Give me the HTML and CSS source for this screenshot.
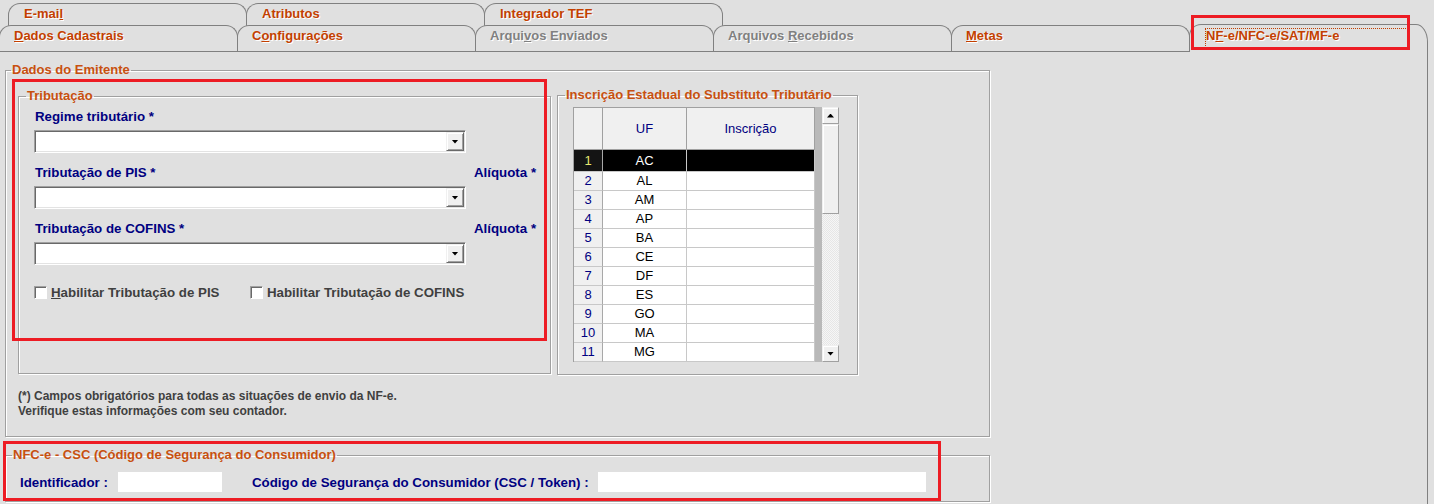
FILE: index.html
```html
<!DOCTYPE html>
<html lang="pt-BR">
<head>
    <meta charset="UTF-8">
    <title>NF-e/NFC-e/SAT/MF-e</title>
    <link rel="stylesheet" href="styles.css">
</head>
<body>

<!-- Abas -->
<div class="tabbar">
    <div class="tab-row tab-row-top">
        <div class="tab">E-mai<u>l</u></div>
        <div class="tab">Atributos</div>
        <div class="tab">Integrador TEF</div>
    </div>
    <div class="tab-row tab-row-bottom">
        <div class="tab"><u>D</u>ados Cadastrais</div>
        <div class="tab">C<u>o</u>nfigurações</div>
        <div class="tab tab-disabled">Arqui<u>v</u>os Enviados</div>
        <div class="tab tab-disabled">Arquivos <u>R</u>ecebidos</div>
        <div class="tab"><u>M</u>etas</div>
        <div class="tab tab-active"><span class="focus">N<u>F</u>-e/NFC-e/SAT/MF-e</span></div>
    </div>
</div>

<div class="panel">
    <fieldset class="group emitente">
        <legend>Dados do Emitente</legend>
        <div class="emitente-row">

            <!-- Tributação -->
            <fieldset class="group tributacao">
                <legend>Tributação</legend>
                <div class="trib-body">
                    <div class="field-head"><span>Regime tributário *</span></div>
                    <div class="combo"><span class="combo-btn"></span></div>

                    <div class="field-head"><span>Tributação de PIS *</span><span>Alíquota *</span></div>
                    <div class="combo"><span class="combo-btn"></span></div>

                    <div class="field-head"><span>Tributação de COFINS *</span><span>Alíquota *</span></div>
                    <div class="combo"><span class="combo-btn"></span></div>

                    <div class="checks">
                        <label class="check"><span class="check-box"></span><span><u>H</u>abilitar Tributação de PIS</span></label>
                        <label class="check"><span class="check-box"></span><span>Habilitar Tributação de COFINS</span></label>
                    </div>
                </div>
            </fieldset>

            <!-- Inscrição Estadual -->
            <fieldset class="group ie">
                <legend>Inscrição Estadual do Substituto Tributário</legend>
                <div class="ie-body">
                    <div class="grid">
                        <div class="grid-row grid-head">
                            <div class="cell cell-head"></div>
                            <div class="cell cell-head">UF</div>
                            <div class="cell cell-head">Inscrição</div>
                        </div>
                        <div class="grid-row selected"><div class="cell cell-num">1</div><div class="cell">AC</div><div class="cell"></div></div>
                        <div class="grid-row"><div class="cell cell-num">2</div><div class="cell">AL</div><div class="cell"></div></div>
                        <div class="grid-row"><div class="cell cell-num">3</div><div class="cell">AM</div><div class="cell"></div></div>
                        <div class="grid-row"><div class="cell cell-num">4</div><div class="cell">AP</div><div class="cell"></div></div>
                        <div class="grid-row"><div class="cell cell-num">5</div><div class="cell">BA</div><div class="cell"></div></div>
                        <div class="grid-row"><div class="cell cell-num">6</div><div class="cell">CE</div><div class="cell"></div></div>
                        <div class="grid-row"><div class="cell cell-num">7</div><div class="cell">DF</div><div class="cell"></div></div>
                        <div class="grid-row"><div class="cell cell-num">8</div><div class="cell">ES</div><div class="cell"></div></div>
                        <div class="grid-row"><div class="cell cell-num">9</div><div class="cell">GO</div><div class="cell"></div></div>
                        <div class="grid-row"><div class="cell cell-num">10</div><div class="cell">MA</div><div class="cell"></div></div>
                        <div class="grid-row"><div class="cell cell-num">11</div><div class="cell">MG</div><div class="cell"></div></div>
                    </div>
                    <div class="grid-gap"></div>
                    <div class="scrollbar">
                        <div class="sb-btn sb-up"></div>
                        <div class="sb-thumb"></div>
                        <div class="sb-track"></div>
                        <div class="sb-btn sb-down"></div>
                    </div>
                </div>
            </fieldset>
        </div>

        <p class="note">(*) Campos obrigatórios para todas as situações de envio da NF-e.<br>Verifique estas informações com seu contador.</p>
    </fieldset>

    <!-- CSC -->
    <fieldset class="group csc">
        <legend>NFC-e - CSC (Código de Segurança do Consumidor)</legend>
        <div class="csc-row">
            <span class="csc-label-id">Identificador :</span>
            <span class="csc-input csc-input-id"></span>
            <span class="csc-label-token">Código de Segurança do Consumidor (CSC / Token) :</span>
            <span class="csc-input csc-input-token"></span>
        </div>
    </fieldset>
</div>

<!-- marcações em vermelho -->
<div class="mark mark-tab"></div>
<div class="mark mark-trib"></div>
<div class="mark mark-csc"></div>

</body>
</html>
```

FILE: styles.css
```css
* {
    box-sizing: border-box;
}

html, body {
    margin: 0;
    height: 100%;
}

body {
    position: relative;
    overflow: hidden;
    background-color: #e0e0e0;
    font-family: "Liberation Sans", Arial, sans-serif;
    font-size: 13px;
}

/* abas */
.tabbar {
    height: 51px;
}

.tab-row {
    display: flex;
    align-items: flex-end;
}

.tab-row-top {
    height: 28px;
    padding: 3px 0 0 8px;
}

.tab-row-bottom {
    position: relative;
    z-index: 1;
    height: 26px;
    margin-top: -3px;
    margin-left: -1px;
}

.tab {
    flex: none;
    width: 239px;
    margin-right: -1px;
    border: 1px solid #808080;
    border-bottom: none;
    border-radius: 12px 12px 0 0;
    background-color: #e0e0e0;
    color: #c43f00;
    font-weight: bold;
    line-height: 14px;
    white-space: nowrap;
    text-shadow: 1px 1px 0 #fff;
}

.tab-row-top .tab {
    height: 25px;
    padding: 3px 0 0 15px;
}

.tab-row-bottom .tab {
    height: 26px;
    padding: 3px 0 0 14px;
}

.tab-disabled {
    color: #808080;
}

.tab-row-bottom .tab-active {
    height: 28px;
    margin-bottom: -1px;
    padding: 0 0 0 15px;
    border-top-right-radius: 12px 18px;
}

.focus {
    display: block;
    width: 203px;
    height: 20px;
    margin-top: 3px;
    border: 1px dotted #c43f00;
}

/* painel */
.panel {
    width: 1428px;
    height: 453px;
    padding: 11px 0 0 5px;
    border-top: 1px solid #808080;
    border-right: 1px solid #808080;
}

.group {
    margin: 0;
    padding: 0;
    min-width: 0;
    border: 1px solid #a0a0a0;
    box-shadow: inset 1px 1px 0 #fff, 1px 1px 0 #fff;
}

.group legend {
    margin-left: 5px;
    padding: 0 1px;
    color: #c8500f;
    font-weight: bold;
    line-height: 14px;
}

.emitente {
    width: 985px;
    height: 374px;
}

.emitente-row {
    display: flex;
    align-items: flex-start;
    gap: 6px;
    margin: 12px 0 0 12px;
}

.tributacao {
    width: 533px;
    height: 285px;
}

.tributacao legend, .ie legend {
    margin-left: 7px;
}

.group.ie {
    width: 301px;
    height: 287px;
    margin-top: -1px;
}

/* tributação */
.trib-body {
    padding: 7px 0 0 15px;
}

.field-head {
    display: grid;
    grid-template-columns: 439px auto;
    margin-left: 1px;
    color: #000080;
    font-size: 13.3px;
    font-weight: bold;
    line-height: 14px;
}

.combo + .field-head {
    margin-top: 13px;
}

.combo {
    display: flex;
    justify-content: flex-end;
    width: 432px;
    height: 23px;
    margin-top: 6px;
    padding: 1px;
    background-color: #fff;
    border: 1px solid;
    border-color: #a0a0a0 #fff #fff #a0a0a0;
    box-shadow: inset 1px 1px 0 #696969, inset -1px -1px 0 #e3e3e3;
}

.combo-btn {
    display: flex;
    align-items: center;
    justify-content: center;
    width: 18px;
    height: 19px;
    background-color: #f0f0f0;
    border: 1px solid;
    border-color: #f0f0f0 #696969 #696969 #f0f0f0;
    box-shadow: inset 1px 1px 0 #fff, inset -1px -1px 0 #a0a0a0;
}

.combo-btn::after, .sb-btn::after {
    content: "";
    width: 7px;
    height: 4px;
    background-color: #000;
    clip-path: polygon(0 0, 100% 0, 50% 100%);
}

.checks {
    display: flex;
    margin-top: 20px;
    color: #404040;
    font-size: 13.3px;
    font-weight: bold;
    line-height: 15px;
}

.check {
    display: flex;
    align-items: center;
    gap: 4px;
    width: 216px;
}

.check-box {
    width: 13px;
    height: 13px;
    background-color: #fff;
    border: 1px solid;
    border-color: #a0a0a0 #fff #fff #a0a0a0;
    box-shadow: inset 1px 1px 0 #696969;
}

/* grade de inscrição */
.ie-body {
    display: flex;
    margin: 5px 0 0 15px;
}

.grid {
    width: 242px;
    border-top: 1px solid #a0a0a0;
    border-left: 1px solid #a0a0a0;
}

.grid-row {
    display: grid;
    grid-template-columns: 29px 84px 128px;
    height: 19px;
}

.grid-head {
    height: 42px;
}

.grid-row.selected {
    height: 22px;
}

.cell {
    border-right: 1px solid #c8c8c8;
    border-bottom: 1px solid #c8c8c8;
    background-color: #fff;
    color: #000;
    text-align: center;
    line-height: 18px;
}

.cell-head {
    background-color: #f0f0f0;
    border-color: #a0a0a0;
    color: #000080;
    line-height: 41px;
}

.cell-num {
    background-color: #f0f0f0;
    border-right-color: #a8a8a8;
    color: #000080;
}

.selected .cell {
    background-color: #000;
    color: #fff;
    line-height: 21px;
}

.selected .cell-num {
    background-color: #141414;
    color: #e8e870;
}

.grid-gap {
    width: 7px;
    background-color: #b9b9b9;
}

.scrollbar {
    display: flex;
    flex-direction: column;
    width: 17px;
}

.sb-btn, .sb-thumb {
    background-color: #f0f0f0;
    border: 1px solid;
    border-color: #f0f0f0 #a0a0a0 #a0a0a0 #f0f0f0;
    box-shadow: inset 1px 1px 0 #fff;
}

.sb-btn {
    display: flex;
    align-items: center;
    justify-content: center;
    height: 17px;
}

.sb-up::after {
    clip-path: polygon(50% 0, 100% 100%, 0 100%);
}

.sb-thumb {
    height: 90px;
}

.sb-track {
    flex: 1;
    background: repeating-conic-gradient(#f6f6f6 0 25%, #e6e6e6 0 50%) 0 0 / 2px 2px;
}

.note {
    margin: 14px 0 0 12px;
    color: #404040;
    font-size: 12px;
    font-weight: bold;
    line-height: 15px;
}

/* CSC */
.group.csc {
    width: 985px;
    height: 54px;
    margin-top: 11px;
}

.csc legend {
    margin-left: 6px;
}

.csc-row {
    display: flex;
    align-items: center;
    margin: 10px 0 0 14px;
    color: #000080;
    font-size: 13.3px;
    font-weight: bold;
}

.csc-label-id {
    width: 98px;
}

.csc-input {
    height: 20px;
    background-color: #fff;
}

.csc-input-id {
    width: 104px;
}

.csc-label-token {
    width: 346px;
    margin-left: 30px;
}

.csc-input-token {
    width: 328px;
}

/* marcações */
.mark {
    position: absolute;
    z-index: 5;
    border: 3px solid #ed1c24;
    pointer-events: none;
}

.mark-tab {
    left: 1191px;
    top: 15px;
    width: 219px;
    height: 35px;
}

.mark-trib {
    left: 12px;
    top: 79px;
    width: 535px;
    height: 262px;
}

.mark-csc {
    left: 3px;
    top: 441px;
    width: 938px;
    height: 60px;
}
```
